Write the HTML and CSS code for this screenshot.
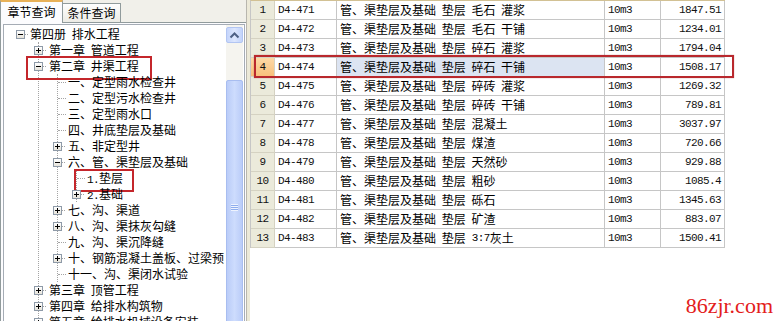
FILE: index.html
```html
<!DOCTYPE html>
<html>
<head>
<meta charset="utf-8">
<link rel="stylesheet" href="styles.css">
</head>
<body>
<div class="app">
  <div class="left">
    <div class="tabs">
      <div class="tab active">章节查询</div>
      <div class="tab">条件查询</div>
    </div>
    <div class="tabpanel">
      <div class="treebox">
        <div class="tree">
          <div class="row root"><span class="exp minus"></span><span class="dash"></span><span class="lbl">第四册 排水工程</span></div>
          <div class="kids k1">
            <div class="row"><span class="exp"></span><span class="dash"></span><span class="lbl">第一章 管道工程</span></div>
            <div class="row mark mark-ch"><span class="exp minus"></span><span class="dash"></span><span class="lbl">第二章 井渠工程</span></div>
            <div class="kids k2">
              <div class="row"><span class="leaf"></span><span class="lbl">一、定型雨水检查井</span></div>
              <div class="row"><span class="leaf"></span><span class="lbl">二、定型污水检查井</span></div>
              <div class="row"><span class="leaf"></span><span class="lbl">三、定型雨水口</span></div>
              <div class="row"><span class="leaf"></span><span class="lbl">四、井底垫层及基础</span></div>
              <div class="row"><span class="exp"></span><span class="dash"></span><span class="lbl">五、非定型井</span></div>
              <div class="row"><span class="exp minus"></span><span class="dash"></span><span class="lbl">六、管、渠垫层及基础</span></div>
              <div class="kids k3">
                <div class="row mark mark-sub"><span class="leaf"></span><span class="lbl"><span class="a">1.</span>垫层</span></div>
                <div class="row"><span class="exp"></span><span class="dash"></span><span class="lbl"><span class="a">2.</span>基础</span></div>
              </div>
              <div class="row"><span class="exp"></span><span class="dash"></span><span class="lbl">七、沟、渠道</span></div>
              <div class="row"><span class="exp"></span><span class="dash"></span><span class="lbl">八、沟、渠抹灰勾缝</span></div>
              <div class="row"><span class="leaf"></span><span class="lbl">九、沟、渠沉降缝</span></div>
              <div class="row"><span class="exp"></span><span class="dash"></span><span class="lbl">十、钢筋混凝土盖板、过梁预</span></div>
              <div class="row"><span class="leaf"></span><span class="lbl">十一、沟、渠闭水试验</span></div>
            </div>
            <div class="row"><span class="exp"></span><span class="dash"></span><span class="lbl">第三章 顶管工程</span></div>
            <div class="row"><span class="exp"></span><span class="dash"></span><span class="lbl">第四章 给排水构筑物</span></div>
            <div class="row"><span class="exp"></span><span class="dash"></span><span class="lbl">第五章 给排水机械设备安装</span></div>
          </div>
        </div>
        <div class="vscroll">
          <div class="sbtn">
            <svg width="15" height="15" viewBox="0 0 15 15"><path d="M3.5 9.5 L7.5 5.5 L11.5 9.5" fill="none" stroke="#4D6185" stroke-width="2"/></svg>
          </div>
          <div class="thumb"><div class="grip"></div></div>
        </div>
      </div>
    </div>
  </div>
  <div class="split"></div>
  <div class="right">
    <div class="grid">
      <div class="gr"><div class="c n">1</div><div class="c code">D4-471</div><div class="c desc">管、渠垫层及基础 垫层 毛石 灌浆</div><div class="c unit">10m3</div><div class="c amt">1847.51</div></div>
      <div class="gr"><div class="c n">2</div><div class="c code">D4-472</div><div class="c desc">管、渠垫层及基础 垫层 毛石 干铺</div><div class="c unit">10m3</div><div class="c amt">1234.01</div></div>
      <div class="gr"><div class="c n">3</div><div class="c code">D4-473</div><div class="c desc">管、渠垫层及基础 垫层 碎石 灌浆</div><div class="c unit">10m3</div><div class="c amt">1794.04</div></div>
      <div class="gr sel"><div class="c n">4</div><div class="c code">D4-474</div><div class="c desc">管、渠垫层及基础 垫层 碎石 干铺</div><div class="c unit">10m3</div><div class="c amt">1508.17</div></div>
      <div class="gr"><div class="c n">5</div><div class="c code">D4-475</div><div class="c desc">管、渠垫层及基础 垫层 碎砖 灌浆</div><div class="c unit">10m3</div><div class="c amt">1269.32</div></div>
      <div class="gr"><div class="c n">6</div><div class="c code">D4-476</div><div class="c desc">管、渠垫层及基础 垫层 碎砖 干铺</div><div class="c unit">10m3</div><div class="c amt">789.81</div></div>
      <div class="gr"><div class="c n">7</div><div class="c code">D4-477</div><div class="c desc">管、渠垫层及基础 垫层 混凝土</div><div class="c unit">10m3</div><div class="c amt">3037.97</div></div>
      <div class="gr"><div class="c n">8</div><div class="c code">D4-478</div><div class="c desc">管、渠垫层及基础 垫层 煤渣</div><div class="c unit">10m3</div><div class="c amt">720.66</div></div>
      <div class="gr"><div class="c n">9</div><div class="c code">D4-479</div><div class="c desc">管、渠垫层及基础 垫层 天然砂</div><div class="c unit">10m3</div><div class="c amt">929.88</div></div>
      <div class="gr"><div class="c n">10</div><div class="c code">D4-480</div><div class="c desc">管、渠垫层及基础 垫层 粗砂</div><div class="c unit">10m3</div><div class="c amt">1085.4</div></div>
      <div class="gr"><div class="c n">11</div><div class="c code">D4-481</div><div class="c desc">管、渠垫层及基础 垫层 砾石</div><div class="c unit">10m3</div><div class="c amt">1345.63</div></div>
      <div class="gr"><div class="c n">12</div><div class="c code">D4-482</div><div class="c desc">管、渠垫层及基础 垫层 矿渣</div><div class="c unit">10m3</div><div class="c amt">883.07</div></div>
      <div class="gr"><div class="c n">13</div><div class="c code">D4-483</div><div class="c desc">管、渠垫层及基础 垫层<span class="a gap">3:7</span>灰土</div><div class="c unit">10m3</div><div class="c amt">1500.41</div></div>
    </div>
    <div class="selbox"></div>
    <div class="wm">86zjr.com</div>
  </div>
</div>
</body>
</html>
```

FILE: styles.css
```css
* { box-sizing: border-box; }
html, body { margin: 0; padding: 0; }
body {
  width: 776px;
  height: 321px;
  overflow: hidden;
  background: #fff;
  font-family: "Noto Sans CJK SC", sans-serif;
  font-size: 12px;
  color: #000;
}
.app { display: flex; height: 321px; }

/* ---------- left panel ---------- */
.left {
  width: 246px;
  flex: none;
  background: #F1F0EA;
  display: flex;
  flex-direction: column;
}
.tabs {
  height: 23px;
  display: flex;
  align-items: flex-end;
  position: relative;
  z-index: 1;
}
.tab {
  font-size: 12px;
  text-align: center;
  white-space: nowrap;
}
.tab.active {
  width: 63px;
  height: 23px;
  line-height: 20px;
  background: #FCFCFE;
  border: 1px solid #919B9C;
  border-top: 2px solid #E8B158;
  border-bottom: none;
}
.tab:not(.active) {
  width: 58px;
  height: 19px;
  line-height: 18px;
  margin-bottom: 1px;
  background: linear-gradient(#FEFEFE, #ECEBE5);
  border: 1px solid #919B9C;
  border-left: none;
  border-bottom: none;
}
.tabpanel {
  flex: 1;
  border-top: 1px solid #919B9C;
  border-left: 1px solid #919B9C;
  background: #FCFCFE;
  padding: 1px 0 0 2px;
  margin-top: -1px;
  overflow: hidden;
}
.treebox {
  width: 242px;
  height: 400px;
  border: 1px solid #A5ACB5;
  background: #fff;
  display: flex;
}
.tree {
  flex: 1;
  overflow: hidden;
  padding-top: 1px;
}
.row {
  display: flex;
  align-items: center;
  height: 16px;
  white-space: nowrap;
  position: relative;
}
.root { padding-left: 12px; }
.kids { border-left: 1px dotted #A4A4A4; }
.k1 { margin-left: 34px; }
.k2 { margin-left: 18px; }
.k3 { margin-left: 18px; }

.exp {
  position: relative;
  width: 9px;
  height: 9px;
  flex: none;
  margin-left: -5px;
  border: 1px solid #8E9AA8;
  background: linear-gradient(#FFFFFF, #E6E3DA);
}
.root .exp { margin-left: 0; }
.exp::before {
  content: "";
  position: absolute;
  left: 1px;
  top: 3px;
  width: 5px;
  height: 1px;
  background: #000;
}
.exp:not(.minus)::after {
  content: "";
  position: absolute;
  left: 3px;
  top: 1px;
  width: 1px;
  height: 5px;
  background: #000;
}
.dash {
  width: 3px;
  flex: none;
  margin-right: 3px;
  border-top: 1px dotted #A4A4A4;
}
.root .dash { margin-right: 2px; }
.leaf {
  width: 8px;
  flex: none;
  margin-right: 2px;
  border-top: 1px dotted #A4A4A4;
}
.lbl {
  display: block;
  font-size: 12px;
  height: 16px;
  line-height: 16px;
  word-spacing: 3px;
}
.a {
  font-family: "Liberation Mono", monospace;
  font-size: 11px;
  letter-spacing: -0.6px;
  line-height: 16px;
}
.gap { margin-left: 6px; }
.mark::after {
  content: "";
  position: absolute;
  border: 2px solid #C4262B;
  pointer-events: none;
}
.mark-ch::after { left: -13px; top: -2px; width: 122px; height: 20px; }
.mark-sub::after { left: -3px; top: -1px; width: 56px; height: 19px; }

/* scrollbar */
.vscroll {
  width: 17px;
  flex: none;
  margin-right: 1px;
  background: #F5F4EF;
  padding-top: 2px;
}
.sbtn {
  height: 16px;
  border: 1px solid #B2C5F2;
  border-radius: 2px;
  background: linear-gradient(90deg, #C5D5FB, #DCE6FE 50%, #C2D3FA);
  display: flex;
  align-items: center;
  justify-content: center;
}
.thumb {
  margin-top: 37px;
  height: 260px;
  border: 1px solid #A8BDF0;
  border-radius: 2px;
  background: linear-gradient(90deg, #BACCF8, #CDDCFD 50%, #BACCF8);
  display: flex;
  align-items: center;
  justify-content: center;
  padding-bottom: 6px;
}
.grip {
  width: 7px;
  height: 7px;
  background: repeating-linear-gradient(#EEF3FE 0 1px, #8EADEE 1px 2px);
}

/* splitter */
.split {
  width: 4px;
  flex: none;
  background: #ECE9D8;
  border-left: 1px solid #B8B6AE;
}

/* ---------- right panel ---------- */
.right {
  flex: 1;
  position: relative;
  background: #fff;
}
.grid {
  width: 475px;
  border-top: 1px solid #D2C194;
  border-left: 1px solid #C6C6C6;
}
.gr {
  display: grid;
  grid-template-columns: 24px 62px 268px 56px 64px;
  height: 19px;
}
.c {
  height: 19px;
  border-right: 1px solid #C6C6C6;
  border-bottom: 1px solid #C6C6C6;
  display: flex;
  align-items: center;
  padding: 0 3px;
  white-space: nowrap;
  overflow: hidden;
  line-height: 18px;
}
.n, .code, .unit, .amt {
  font-family: "Liberation Mono", monospace;
  font-size: 11px;
  letter-spacing: -0.6px;
  color: #111;
}
.n {
  justify-content: center;
  padding: 0;
  background: #EBEADB;
  border-right-color: #D5D2C2;
  border-bottom-color: #D5D2C2;
}
.desc { word-spacing: 3px; }
.amt { justify-content: flex-end; padding-right: 3px; }
.sel .n { background: linear-gradient(#FDD9A6, #F8C07C); }
.sel .desc { background: #DCE4F2; }
.selbox {
  position: absolute;
  left: 4px;
  top: 55px;
  width: 480px;
  height: 23px;
  border: 2px solid #B9282D;
  box-shadow: 0 0 1px rgba(150, 30, 30, 0.5);
  pointer-events: none;
}
.wm {
  position: absolute;
  right: 3px;
  bottom: 3px;
  font-family: "Liberation Serif", serif;
  font-size: 22px;
  line-height: 24px;
  color: #E3201B;
}
```
